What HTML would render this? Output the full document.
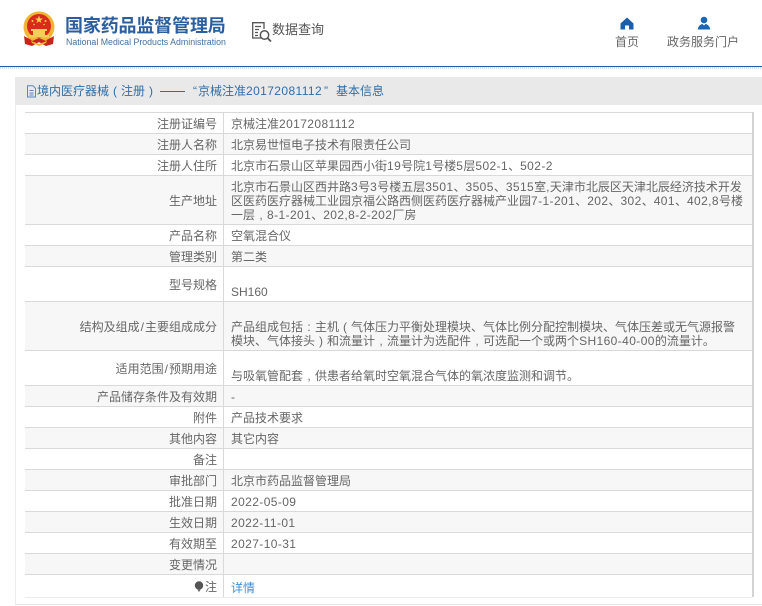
<!DOCTYPE html>
<html><head><meta charset="utf-8">
<style>
html,body{margin:0;padding:0;background:#fff;}
body{width:762px;height:606px;overflow:hidden;position:relative;font-family:"Liberation Sans","Noto Sans CJK SC",sans-serif;font-size:12px;color:#666;}
.a{position:absolute;white-space:nowrap;}
.h{position:absolute;left:25px;width:727px;height:1px;background:#d9d9d9;}
.bg{position:absolute;left:25px;width:727px;background:#f7f7f7;}
.l{position:absolute;left:25px;width:192px;text-align:right;line-height:14px;white-space:nowrap;}
.v{position:absolute;left:231px;line-height:14px;white-space:nowrap;}
i{font-style:normal;letter-spacing:.4px;}
u{text-decoration:none;display:inline-block;width:12px;text-align:center;}
s{text-decoration:none;margin:0 1px;}
.t{position:absolute;top:83px;line-height:16px;color:#2f6ea8;white-space:nowrap;}
</style></head><body>
<svg class="a" style="left:22px;top:11px" width="34" height="36" viewBox="0 0 34 36">
<circle cx="17" cy="16" r="15.5" fill="#f2b632"/>
<circle cx="17" cy="15" r="12" fill="#d92a1c"/>
<polygon points="17,4.5 18,7.5 21,7.5 18.6,9.2 19.5,12 17,10.4 14.5,12 15.4,9.2 13,7.5 16,7.5" fill="#f8d24a"/>
<circle cx="10.5" cy="10" r="1" fill="#f8d24a"/><circle cx="23.5" cy="10" r="1" fill="#f8d24a"/><circle cx="12" cy="13.5" r=".8" fill="#f8d24a"/><circle cx="22" cy="13.5" r=".8" fill="#f8d24a"/>
<path d="M9 18h16v2H9zM11 20h12v4H11zM7 24h20v2.500H7z" fill="#f4cf5a"/>
<path d="M2 25 C5 27 9 28 10 30 L17 27 L24 30 C25 28 29 27 32 25 L31 33 L24 35 L17 31 L10 35 L3 33Z" fill="#c8251a"/>
<path d="M9 30 L17 33 L25 30 L24 32 L17 35 L10 32Z" fill="#f2b632"/>
</svg>
<div class="a" style="left:65px;top:13px;font-size:18px;line-height:26px;font-weight:700;color:#2b5e9e;letter-spacing:-.15px;">国家药品监督管理局</div>
<div class="a" style="left:66px;top:36px;font-size:8.800px;line-height:12px;color:#44709f;">National Medical Products Administration</div>
<svg class="a" style="left:251px;top:21px" width="22" height="22" viewBox="0 0 22 22" fill="none" stroke="#555" stroke-width="1.300">
<path d="M10 17H1.700V1.700H13V8"/><path d="M4 5.500h6M4 8.500h4M4 11.500h3M4 14.500h3"/>
<circle cx="13.500" cy="14" r="4.200" stroke-width="1.500"/><path d="M16.500 17l3.500 3.500" stroke-width="1.800"/>
</svg>
<div class="a" style="left:272px;top:20px;font-size:13px;line-height:20px;color:#555;">数据查询</div>
<svg class="a" style="left:620px;top:17px" width="14" height="13" viewBox="0 0 14 13"><path d="M7 .5L13.500 6.500V12.500H9V8.500H5V12.500H.5V6.500Z" fill="#1c5fa8"/></svg>
<svg class="a" style="left:697px;top:16px" width="14" height="14" viewBox="0 0 14 14"><circle cx="7" cy="4" r="3.300" fill="#1c66b5"/><path d="M.8 13.500C1.200 10 3.500 8.300 5.500 8L7 9.500 8.500 8C10.500 8.300 12.800 10 13.200 13.500Z" fill="#1c66b5"/></svg>
<div class="a" style="left:615px;top:34px;font-size:12px;line-height:16px;color:#666;">首页</div>
<div class="a" style="left:667px;top:34px;font-size:12px;line-height:16px;color:#666;">政务服务门户</div>
<div class="a" style="left:0;top:66px;width:762px;height:1px;background:#1f62a3;"></div>
<div class="a" style="left:0;top:67px;width:762px;height:2px;background:repeating-linear-gradient(90deg,#cfe0ee 0,#cfe0ee 1px,#fff 1px,#fff 2px);"></div>
<div class="a" style="left:15px;top:77px;width:747px;height:528px;background:#fff;border-left:1px solid #ececec;border-bottom:1px solid #e6e6e6;box-sizing:border-box;"></div>
<div class="a" style="left:15px;top:77px;width:747px;height:28px;background:#e9e9e9;"></div>
<svg class="a" style="left:26px;top:85px" width="11" height="13" viewBox="0 0 11 13" fill="none" stroke="#5a87b8" stroke-width="1"><path d="M1.500 .8H7L9.500 3.300V12H1.500Z"/><path d="M3.500 5.500h4M3.500 8h4M3.500 10h4"/></svg>
<div class="t" style="left:37px;">境内医疗器械<u>(</u>注册<u>)</u></div>
<div class="a" style="left:160px;top:91px;width:25px;height:1px;background:#2f6ea8;"></div>
<div class="t" style="left:193px;">“</div>
<div class="t" style="left:198px;">京械注准<i>20172081112</i></div>
<div class="t" style="left:324px;">”</div>
<div class="t" style="left:336px;">基本信息</div>

<div class="bg" style="top:134px;height:20px"></div>
<div class="bg" style="top:176px;height:48px"></div>
<div class="bg" style="top:246px;height:20px"></div>
<div class="bg" style="top:302px;height:48px"></div>
<div class="bg" style="top:386px;height:20px"></div>
<div class="bg" style="top:428px;height:20px"></div>
<div class="bg" style="top:470px;height:20px"></div>
<div class="bg" style="top:512px;height:20px"></div>
<div class="bg" style="top:554px;height:20px"></div>

<div class="h" style="top:112px"></div><div class="h" style="top:133px"></div><div class="h" style="top:154px"></div><div class="h" style="top:175px"></div><div class="h" style="top:224px"></div><div class="h" style="top:245px"></div><div class="h" style="top:266px"></div><div class="h" style="top:301px"></div><div class="h" style="top:350px"></div><div class="h" style="top:385px"></div><div class="h" style="top:406px"></div><div class="h" style="top:427px"></div><div class="h" style="top:448px"></div><div class="h" style="top:469px"></div><div class="h" style="top:490px"></div><div class="h" style="top:511px"></div><div class="h" style="top:532px"></div><div class="h" style="top:553px"></div><div class="h" style="top:574px"></div>
<div class="h" style="top:597px;background:#ececec"></div>
<div class="a" style="left:223px;top:112px;width:1px;height:485px;background:#d9d9d9;"></div>
<div class="a" style="left:752px;top:112px;width:2px;height:485px;background:#d4d4d4;"></div>

<div class="l" style="top:117px">注册证编号</div><div class="v" style="top:117px">京械注准<i>20172081112</i></div>
<div class="l" style="top:138px">注册人名称</div><div class="v" style="top:138px">北京易世恒电子技术有限责任公司</div>
<div class="l" style="top:159px">注册人住所</div><div class="v" style="top:159px">北京市石景山区苹果园西小街<i>19</i>号院<i>1</i>号楼<i>5</i>层<i>502-1</i>、<i>502-2</i></div>
<div class="l" style="top:194px">生产地址</div>
<div class="v" style="top:180px">北京市石景山区西井路<i>3</i>号<i>3</i>号楼五层<i>3501</i>、<i>3505</i>、<i>3515</i>室<i>,</i>天津市北辰区天津北辰经济技术开发<br>区医药医疗器械工业园京福公路西侧医药医疗器械产业园<i>7-1-201</i>、<i>202</i>、<i>302</i>、<i>401</i>、<i>402,8</i>号楼<br>一层<u>,</u><i>8-1-201</i>、<i>202,8-2-202</i>厂房</div>
<div class="l" style="top:229px">产品名称</div><div class="v" style="top:229px">空氧混合仪</div>
<div class="l" style="top:250px">管理类别</div><div class="v" style="top:250px">第二类</div>
<div class="l" style="top:278px">型号规格</div><div class="v" style="top:285px">SH160</div>
<div class="l" style="top:320px">结构及组成<s>/</s>主要组成成分</div>
<div class="v" style="top:320px">产品组成包括<u>:</u>主机<u>(</u>气体压力平衡处理模块、气体比例分配控制模块、气体压差或无气源报警<br>模块、气体接头<u>)</u>和流量计<u>,</u>流量计为选配件<u>,</u>可选配一个或两个<i>SH160-40-00</i>的流量计。</div>
<div class="l" style="top:362px">适用范围<s>/</s>预期用途</div><div class="v" style="top:369px">与吸氧管配套<u>,</u>供患者给氧时空氧混合气体的氧浓度监测和调节。</div>
<div class="l" style="top:390px">产品储存条件及有效期</div><div class="v" style="top:390px">-</div>
<div class="l" style="top:411px">附件</div><div class="v" style="top:411px">产品技术要求</div>
<div class="l" style="top:432px">其他内容</div><div class="v" style="top:432px">其它内容</div>
<div class="l" style="top:453px">备注</div>
<div class="l" style="top:474px">审批部门</div><div class="v" style="top:474px">北京市药品监督管理局</div>
<div class="l" style="top:495px">批准日期</div><div class="v" style="top:495px"><i>2022-05-09</i></div>
<div class="l" style="top:516px">生效日期</div><div class="v" style="top:516px"><i>2022-11-01</i></div>
<div class="l" style="top:537px">有效期至</div><div class="v" style="top:537px"><i>2027-10-31</i></div>
<div class="l" style="top:558px">变更情况</div>
<svg class="a" style="left:194px;top:581px" width="10" height="12" viewBox="0 0 10 12"><circle cx="5" cy="4.500" r="4.200" fill="#555"/><path d="M3.500 8.500h3L5.800 10.500H4.200Z" fill="#777"/></svg>
<div class="l" style="top:580px">注</div><div class="v" style="top:581px;color:#3f8fd8">详情</div>
</body></html>
